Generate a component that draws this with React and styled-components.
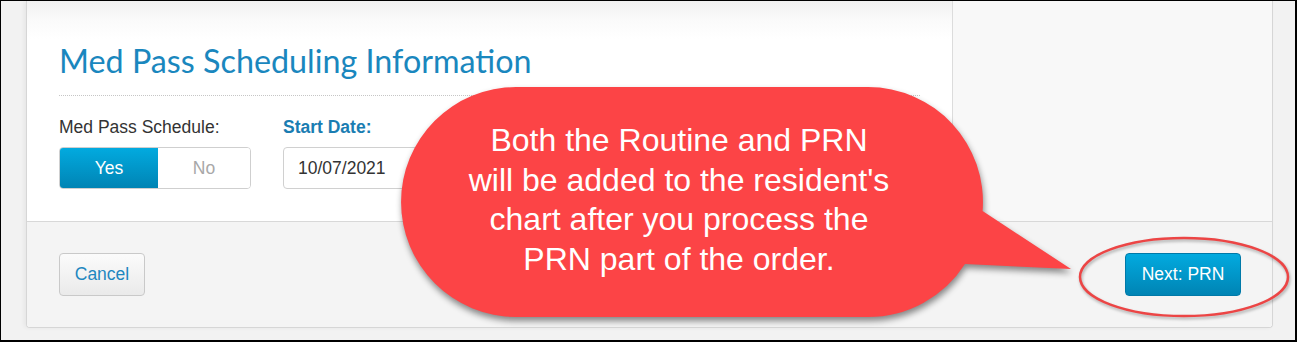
import styled, { createGlobalStyle } from "styled-components";

const GlobalStyle = createGlobalStyle`
  body {
    margin: 0;
    font-family: "Liberation Sans", Arial, sans-serif;
  }
`;

const Frame = styled.div`
  position: relative;
  box-sizing: border-box;
  width: 1297px;
  height: 342px;
  border-style: solid;
  border-color: #000;
  border-width: 1px 2px 2px 1px;
  background: #f2f2f2;
  padding: 0 22px 12px 25px;
  overflow: hidden;
`;

const Panel = styled.div`
  border: 1px solid #d6d6d6;
  border-top: none;
  border-radius: 0 0 4px 4px;
  background: #fff;
  box-shadow: -2px 0 4px rgba(0, 0, 0, 0.05);
  overflow: hidden;
`;

const Body = styled.div`
  display: grid;
  grid-template-columns: 925px 1fr;
`;

const Main = styled.section`
  padding: 40px 32px 32px 32px;
  background: linear-gradient(to bottom, #f1f1f1 0, #fafafa 18px, #fff 38px);
`;

const Side = styled.aside`
  background: #f8f8f8;
  border-left: 1px solid #dcdcdc;
`;

const Heading = styled.h2`
  margin: 0;
  padding-bottom: 14px;
  border-bottom: 1px dotted #c6c6c6;
  font-family: Lato, "Open Sans", sans-serif;
  font-weight: 400;
  font-size: 32.3px;
  line-height: 40px;
  color: #1a87be;
`;

const FieldRow = styled.div`
  display: flex;
  gap: 32px;
  margin-top: 21px;
`;

const Field = styled.div`
  display: flex;
  flex-direction: column;
  gap: 10px;
`;

const Label = styled.label`
  font-size: 17.5px;
  line-height: 20px;
  color: ${(p) => (p.$accent ? "#1a7db2" : "#333")};
  font-weight: ${(p) => (p.$accent ? 700 : 400)};
`;

const Toggle = styled.div`
  display: flex;
  box-sizing: border-box;
  width: 192px;
  height: 42px;
  border: 1px solid #cfcfcf;
  border-radius: 4px;
  overflow: hidden;
  background: #fff;
`;

const ToggleOption = styled.button`
  flex: ${(p) => (p.$active ? "0 0 98px" : "1")};
  margin: 0;
  border: none;
  font-family: inherit;
  font-size: 17.5px;
  color: ${(p) => (p.$active ? "#fff" : "#a8a8a8")};
  background: ${(p) =>
    p.$active ? "linear-gradient(to bottom, #02aadf, #0084b4)" : "#fff"};
`;

const DateInput = styled.div`
  box-sizing: border-box;
  width: 210px;
  height: 42px;
  border: 1px solid #d0d0d0;
  border-radius: 4px;
  background: #fff;
  padding: 0 14px;
  display: flex;
  align-items: center;
  font-size: 17.5px;
  color: #333;
`;

const Footer = styled.footer`
  display: flex;
  justify-content: space-between;
  align-items: center;
  padding: 31px 31px 31px 32px;
  border-top: 1px solid #d8d8d8;
  background: #f4f4f4;
`;

const Button = styled.button`
  box-sizing: border-box;
  height: 43px;
  width: ${(p) => p.$w}px;
  border-radius: 4px;
  font-family: inherit;
  font-size: 17.5px;
  border: 1px solid ${(p) => (p.$primary ? "#0079a8" : "#c9c9c9")};
  color: ${(p) => (p.$primary ? "#fff" : "#1f87c0")};
  background: ${(p) =>
    p.$primary
      ? "linear-gradient(to bottom, #02aadf, #0084b4)"
      : "linear-gradient(to bottom, #fbfbfb, #eaeaea)"};
`;

const CalloutShape = styled.svg`
  position: absolute;
  left: 396px;
  top: 82px;
  width: 690px;
  height: 245px;
  filter: drop-shadow(1px 4px 3px rgba(0, 0, 0, 0.45));
  pointer-events: none;
`;

const CalloutText = styled.div`
  position: absolute;
  left: 428px;
  top: 120px;
  width: 500px;
  text-align: center;
  white-space: nowrap;
  font-size: 32px;
  line-height: 39.5px;
  color: #fff;
`;

const Ring = styled.svg`
  position: absolute;
  left: 1072px;
  top: 232px;
  width: 222px;
  height: 90px;
  filter: drop-shadow(1px 2px 1.5px rgba(0, 0, 0, 0.3));
  pointer-events: none;
`;

export default function App() {
  return (
    <>
      <GlobalStyle />
      <Frame>
        <Panel>
          <Body>
            <Main>
              <Heading>Med Pass Scheduling Information</Heading>
              <FieldRow>
                <Field>
                  <Label>Med Pass Schedule:</Label>
                  <Toggle>
                    <ToggleOption $active>Yes</ToggleOption>
                    <ToggleOption>No</ToggleOption>
                  </Toggle>
                </Field>
                <Field>
                  <Label $accent>Start Date:</Label>
                  <DateInput>10/07/2021</DateInput>
                </Field>
              </FieldRow>
            </Main>
            <Side />
          </Body>
          <Footer>
            <Button $w={86}>Cancel</Button>
            <Button $w={116} $primary>
              Next: PRN
            </Button>
          </Footer>
        </Panel>

        {/* annotation bubble */}
        <CalloutShape viewBox="396 82 690 245">
          <path
            fill="#fc4446"
            d="M515 86 L867 86 A115 115 0 0 1 981.6 210 L1070 268 L964 263 A115 115 0 0 1 867 316 L515 316 A115 115 0 0 1 515 86 Z"
          />
        </CalloutShape>
        <CalloutText>
          Both the Routine and PRN
          <br />
          will be added to the resident's
          <br />
          chart after you process the
          <br />
          PRN part of the order.
        </CalloutText>
        <Ring viewBox="0 0 222 90">
          <ellipse cx="111" cy="44" rx="104" ry="39" fill="none" stroke="#ec4545" strokeWidth="2.5" />
        </Ring>
      </Frame>
    </>
  );
}
